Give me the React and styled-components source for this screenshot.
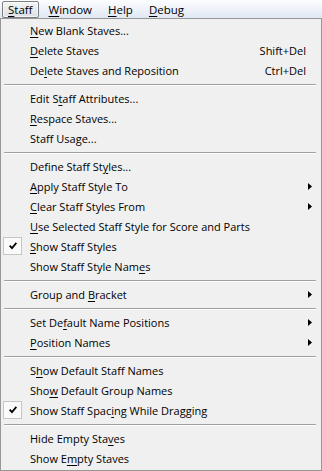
import styled, { createGlobalStyle } from "styled-components"

const Global = createGlobalStyle`
    html, body { margin: 0; padding: 0; }
    body {
        width: 322px;
        height: 471px;
        overflow: hidden;
        background: #F0F0F0;
        font-family: "Open Sans", "Liberation Sans", sans-serif;
        font-size: 11px;
        color: #000000;
    }
`

const menubar = [
    { label: 'Staff', key: 0, open: true },
    { label: 'Window', key: 0 },
    { label: 'Help', key: 0 },
    { label: 'Debug', key: 0 },
]

const groups = [
    [
        { label: 'New Blank Staves...', key: 0 },
        { label: 'Delete Staves', key: 0, shortcut: 'Shift+Del' },
        { label: 'Delete Staves and Reposition', key: 2, shortcut: 'Ctrl+Del' },
    ],
    [
        { label: 'Edit Staff Attributes...', key: 6 },
        { label: 'Respace Staves...', key: 0 },
        { label: 'Staff Usage...', key: 9 },
    ],
    [
        { label: 'Define Staff Styles...', key: 15 },
        { label: 'Apply Staff Style To', key: 0, sub: true },
        { label: 'Clear Staff Styles From', key: 0, sub: true },
        { label: 'Use Selected Staff Style for Score and Parts', key: 0 },
        { label: 'Show Staff Styles', key: 0, checked: true },
        { label: 'Show Staff Style Names', key: 20 },
    ],
    [
        { label: 'Group and Bracket', key: 10, sub: true },
    ],
    [
        { label: 'Set Default Name Positions', key: 6, sub: true },
        { label: 'Position Names', key: 0, sub: true },
    ],
    [
        { label: 'Show Default Staff Names', key: 1 },
        { label: 'Show Default Group Names', key: 3 },
        { label: 'Show Staff Spacing While Dragging', key: 15, checked: true },
    ],
    [
        { label: 'Hide Empty Staves', key: 14 },
        { label: 'Show Empty Staves', key: 6 },
    ],
]

function Label({ text, index }) {
    return (
        <>
            {text.slice(0, index)}
            <u>{text[index]}</u>
            {text.slice(index + 1)}
        </>
    )
}

function Check() {
    return (
        <CheckBox>
            <svg width="8" height="8" viewBox="0 0 8 8">
                <path d="M0 4.2 L1.3 3 L3 4.8 L6.7 0.3 L8 1.4 L3 7.4 Z" fill="#000" />
            </svg>
        </CheckBox>
    )
}

function Arrow() {
    return (
        <svg width="4" height="7" viewBox="0 0 4 7">
            <path d="M0 0 L4 3.5 L0 7 Z" fill="#000" />
        </svg>
    )
}

export default function App() {
    return (
        <>
            <Global />
            <Page>
                <MenuBar>
                    {menubar.map((m) => (
                        <BarItem key={m.label} open={m.open}>
                            <Label text={m.label} index={m.key} />
                        </BarItem>
                    ))}
                </MenuBar>
                <Menu>
                    {groups.map((group, gi) => (
                        <div key={gi}>
                            {gi > 0 && <Separator />}
                            {group.map((item) => (
                                <Item key={item.label}>
                                    <Gutter>{item.checked && <Check />}</Gutter>
                                    <Text><Label text={item.label} index={item.key} /></Text>
                                    <Shortcut>{item.shortcut}</Shortcut>
                                    <SubArrow>{item.sub && <Arrow />}</SubArrow>
                                </Item>
                            ))}
                        </div>
                    ))}
                </Menu>
            </Page>
        </>
    )
}

const Page = styled.div`
    display: flex;
    flex-direction: column;
    width: 322px;
    height: 471px;
`

const MenuBar = styled.div`
    display: flex;
    align-items: center;
    height: 18px;
    padding-left: 2px;
    gap: 4px;
    background: linear-gradient(#FCFDFE 0%, #F0F4FA 45%, #DFE7F3 100%);
`

const BarItem = styled.div`
    height: 15px;
    line-height: 15px;
    padding: 0 5px;
    border: 1px solid ${props => props.open ? '#7B7E83' : 'transparent'};
    border-radius: 2px;
    background: ${props => props.open ? 'linear-gradient(#F4F4F4, #DDE1E6)' : 'transparent'};
    box-shadow: ${props => props.open ? 'inset 0 0 0 1px rgba(255,255,255,0.6)' : 'none'};
    font-size: 11.5px;
    u { text-underline-offset: 2px; }
`

const Menu = styled.div`
    flex: 1;
    border: 1px solid #979797;
    padding: 1px 0;
    background: #F0F0F0;
`

const Item = styled.div`
    display: grid;
    grid-template-columns: 29px 1fr auto 15px;
    align-items: center;
    height: 20px;
    u { text-underline-offset: 2px; }
`

const Gutter = styled.div`
    display: flex;
    align-items: center;
    height: 20px;
    padding-left: 2px;
`

const CheckBox = styled.div`
    display: flex;
    align-items: center;
    justify-content: center;
    width: 19px;
    height: 18px;
    border: 1px solid #C6C6C6;
    background: #FAFAFA;
    box-sizing: border-box;
`

const Text = styled.div`
    white-space: nowrap;
`

const Shortcut = styled.div`
    white-space: nowrap;
    text-align: right;
`

const SubArrow = styled.div`
    display: flex;
    align-items: center;
    padding-left: 2px;
`

const Separator = styled.div`
    height: 8px;
    display: flex;
    align-items: center;
    padding: 0 5px 0 3px;
    &::before {
        content: "";
        flex: 1;
        height: 1px;
        background: #A0A0A0;
        box-shadow: 0 1px 0 #FFFFFF;
    }
`
